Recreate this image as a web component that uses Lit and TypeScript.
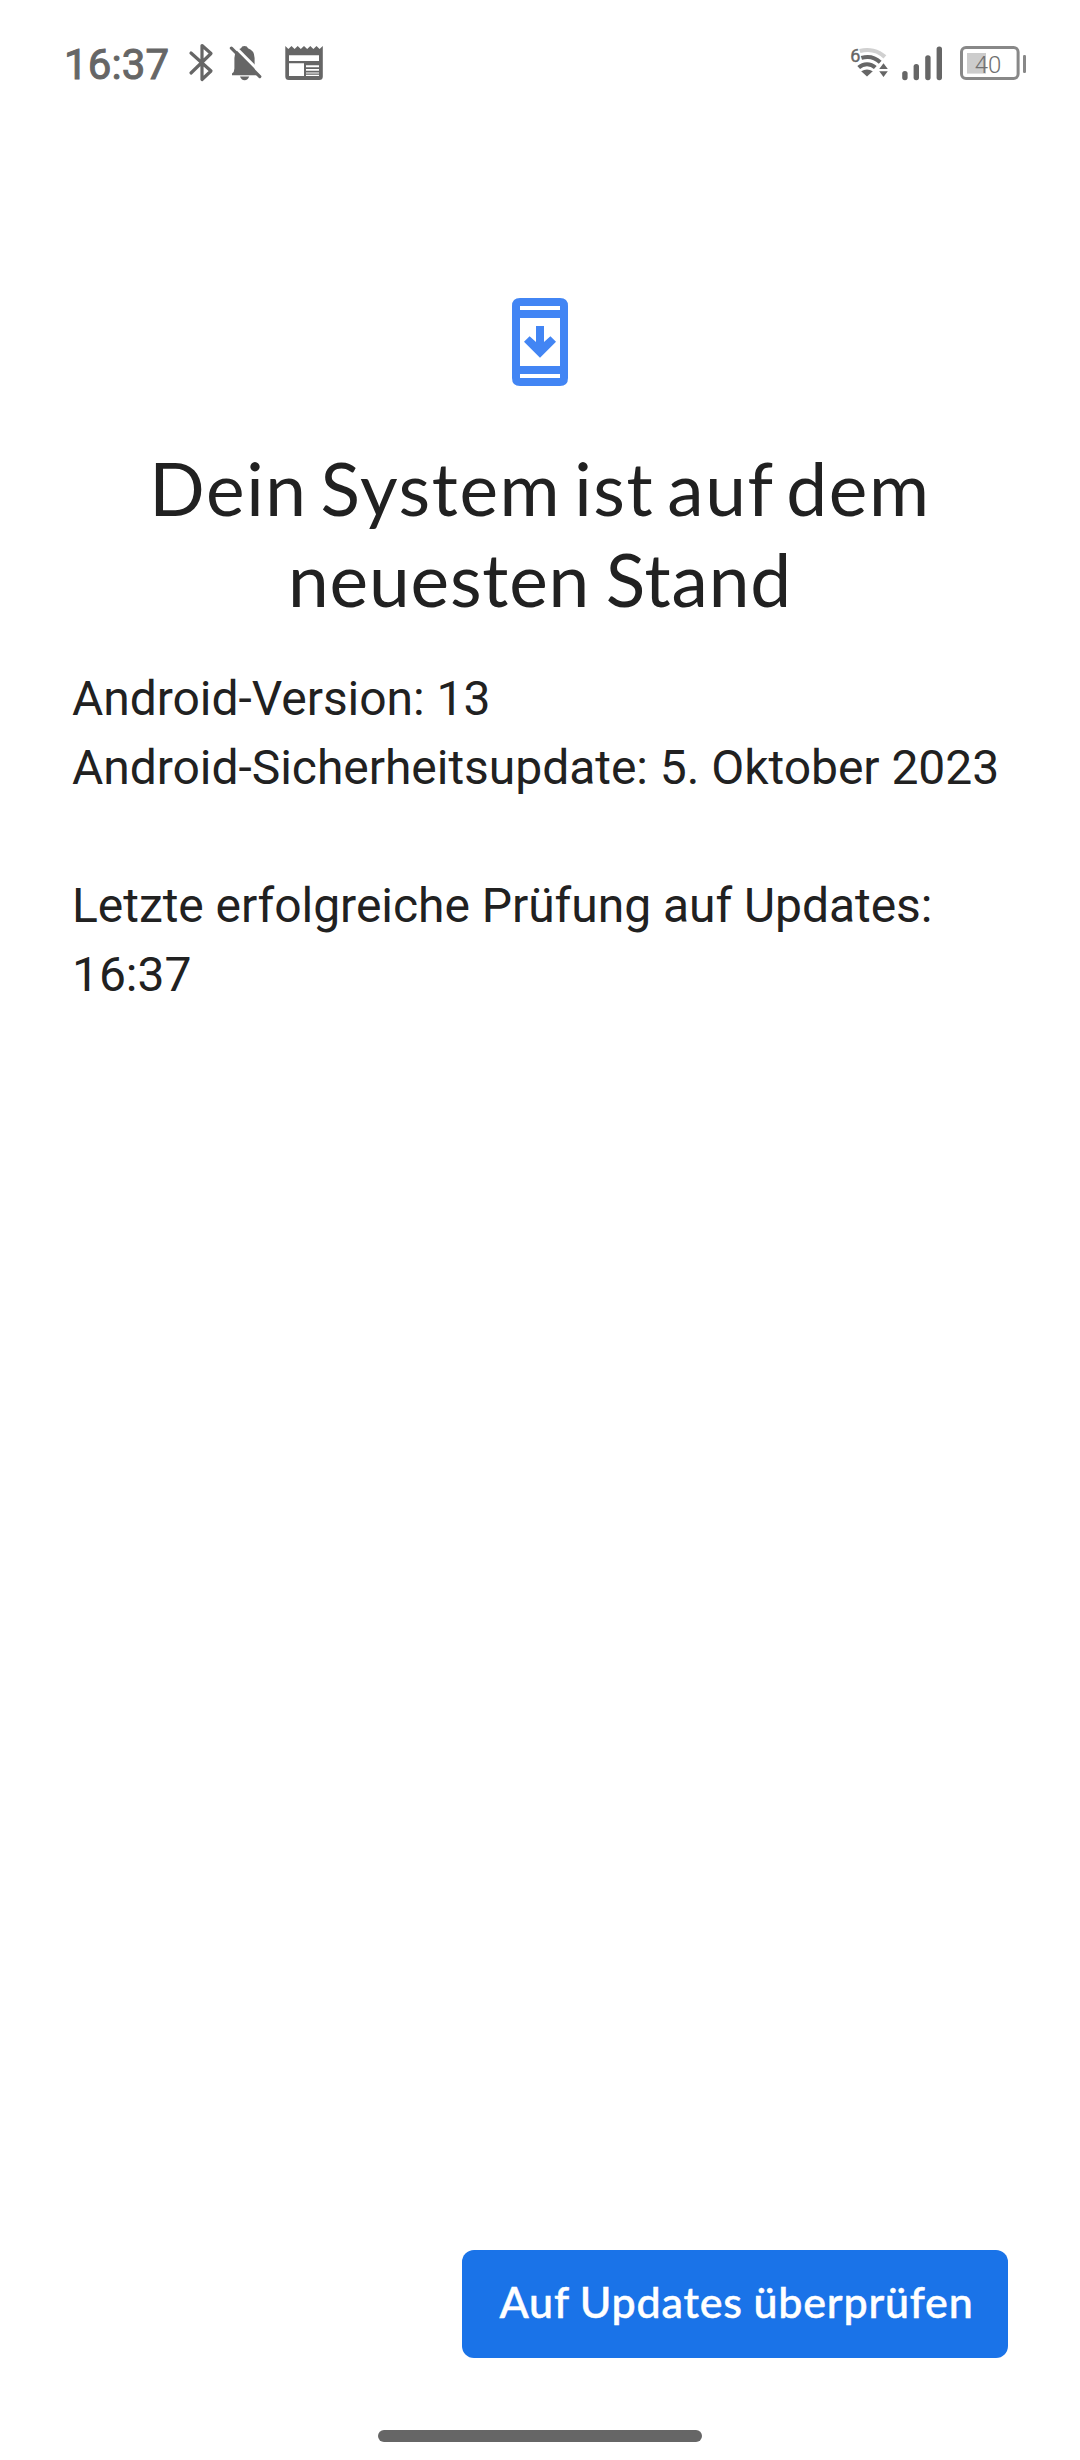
import { LitElement, html, css } from "lit";
import { customElement } from "lit/decorators.js";

@customElement("status-bar")
class StatusBar extends LitElement {
  static styles = css`
    :host { display: flex; width: 1080px; height: 126px; padding: 0 54px 0 64px; box-sizing: border-box; align-items: flex-start; justify-content: space-between; color: #666; font-family: Roboto, sans-serif; }
    .group { display: flex; align-items: flex-start; }
    svg { display: block; flex: none; }
    .time { font-size: 42px; font-weight: 400; -webkit-text-stroke: 1px #666; line-height: 50px; margin-top: 40px; width: 116px; white-space: nowrap; letter-spacing: 0.1px; }
    .six { font: 400 18px Roboto, sans-serif; fill: #666; stroke: #666; stroke-width: 0.4; }
    .level { font: 300 24px Roboto, sans-serif; fill: #707070; }
  `;
  render() {
    return html`
      <div class="group">
        <div class="time">16:37</div>
        <svg width="160" height="126" viewBox="180 0 160 126" fill="#666">
          <path d="M191 53L211 71L202 79.5V45.5L211 53.5L191 73" fill="none" stroke="#666" stroke-width="3.2" stroke-linejoin="round" stroke-linecap="round"/>
          <path d="M232 75.2V73.6Q234.4 72 234.4 68.5V58Q234.6 50.2 241 48.3Q241.6 46 244.5 46Q247.4 46 248 48.3Q254.4 50.4 254.6 58V68.5Q254.6 72 257 74V75.2Z"/>
          <path d="M240 76.6H249.2Q248 80.2 244.6 80.2Q241.2 80.2 240 76.6Z"/>
          <path d="M233 44.8L263 74.8" stroke="#fff" stroke-width="3"/>
          <path d="M231.4 48.2L259.8 76.6" stroke="#666" stroke-width="3.2" stroke-linecap="round"/>
          <path fill-rule="evenodd" d="M285.3 46L288.4 49L291.5 46L294.6 49L297.7 46L300.8 49L304 46L307.2 49L310.3 46L313.4 49L316.5 46L319.6 49L322.8 46V76.5Q322.8 80 319.3 80H288.8Q285.3 80 285.3 76.5ZM289 55.3V61H319V55.3ZM289 63.2V76H304V63.2ZM306 65.3V67.3H319V65.3ZM306 69V70.8H319V69ZM306 72.4V73.6H319V72.4ZM306 74.8V76H319V74.8Z"/>
        </svg>
      </div>
      <div class="group">
        <svg width="180" height="126" viewBox="846 0 180 126" fill="#666">
          <path d="M859.8 51.1A26 26 0 0 1 884.9 56.9" fill="none" stroke="#d0d0d0" stroke-width="4.2"/>
          <path d="M861.4 57.9A19 19 0 0 1 880.2 62.3" fill="none" stroke="#666" stroke-width="4"/>
          <path d="M858.7 67.5A12 12 0 0 1 875.3 67.5" fill="none" stroke="#666" stroke-width="4"/>
          <path d="M867 76.6L861.2 71.3Q867 67.5 872.8 71.3Z"/>
          <path d="M883.5 63.3L887.8 69H879.2ZM883.5 77L887.8 71.2H879.2Z"/>
          <text class="six" x="850.3" y="62.3">6</text>
          <rect x="902.2" y="71" width="5.4" height="9.2" rx="2.6"/>
          <rect x="913.6" y="64" width="5.4" height="16.2" rx="2.6"/>
          <rect x="925.2" y="55.2" width="5.4" height="25" rx="2.6"/>
          <rect x="936.6" y="46.4" width="5.4" height="33.8" rx="2.6"/>
          <rect x="967" y="53" width="19" height="20.6" fill="#ccc"/>
          <rect x="961.5" y="47.4" width="56.6" height="31.2" rx="4.5" fill="none" stroke="#888" stroke-width="3"/>
          <rect x="1023" y="55" width="3" height="18" rx="1.2" fill="#888"/>
          <text class="level" x="974.8" y="73">40</text>
        </svg>
      </div>
    `;
  }
}

@customElement("app-root")
class AppRoot extends LitElement {
  static styles = css`
    :host { display: flex; flex-direction: column; box-sizing: border-box; width: 1080px; height: 2460px; background: #fff; color: #212121; font-family: Roboto, sans-serif; }
    .main { flex: 1; display: flex; flex-direction: column; align-items: center; padding: 172px 0 0; }
    .icon { display: block; width: 56px; height: 88px; }
    h1 { margin: 57px 0 0; font: 400 73px/91px Lato, sans-serif; text-align: center; white-space: nowrap; }
    .first, .second { display: block; }
    .first { letter-spacing: 1.65px; word-spacing: -7.5px; }
    .second { letter-spacing: 0.85px; word-spacing: -4px; }
    .info { align-self: stretch; margin-top: 39px; padding-left: 72px; font-size: 48px; line-height: 69px; letter-spacing: -0.04px; white-space: nowrap; }
    p { margin: 0 0 69px; }
    .footer { display: flex; justify-content: flex-end; padding-right: 72px; }
    button { width: 546px; height: 108px; padding: 0 0 5px 3px; border: 0; border-radius: 12px; background: #1a73e8; color: #fff; font: 500 43px/50px Lato, sans-serif; letter-spacing: 0.8px; word-spacing: -1px; -webkit-text-stroke: 0.5px #fff; white-space: nowrap; }
    .nav { height: 102px; display: flex; justify-content: center; }
    .handle { width: 324px; height: 12px; margin-top: 72px; border-radius: 6px; background: #666; }
  `;
  render() {
    return html`
      <status-bar></status-bar>
      <div class="main">
        <svg class="icon" viewBox="512 298 56 88" fill="#4285f4">
          <path fill-rule="evenodd" d="M520 298H560Q568 298 568 306V378Q568 386 560 386H520Q512 386 512 378V306Q512 298 520 298ZM520 306V310H560V306ZM520 318V366H560V318ZM520 374V378H560V374Z"/>
          <path d="M536 326H544V342L550.4 336.2L556 341.7L540 357.7L524 341.7L529.6 336.2L536 342Z"/>
        </svg>
        <h1><span class="first">Dein System ist auf dem</span><span class="second">neuesten Stand</span></h1>
        <div class="info">
          <p>Android-Version: 13<br />Android-Sicherheitsupdate: 5. Oktober 2023</p>
          <p>Letzte erfolgreiche Prüfung auf Updates:<br />16:37</p>
        </div>
      </div>
      <div class="footer"><button>Auf Updates überprüfen</button></div>
      <div class="nav"><div class="handle"></div></div>
    `;
  }
}
